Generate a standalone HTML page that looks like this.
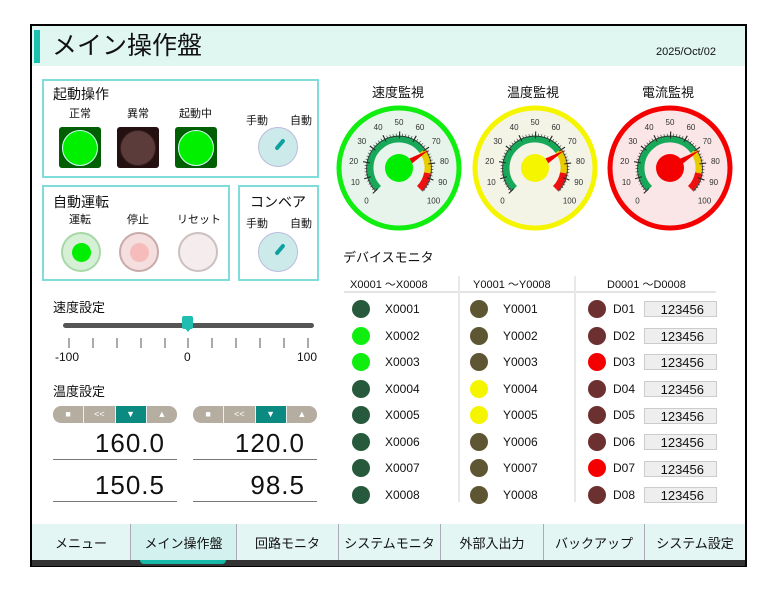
<!DOCTYPE html>
<html><head><meta charset="utf-8"><style>
*{margin:0;padding:0;box-sizing:border-box}
body{width:780px;height:592px;background:#fff;position:relative;font-family:"Liberation Sans","Noto Sans CJK JP",sans-serif;color:#111;overflow:hidden}
.a{position:absolute}
.frame{left:30px;top:24px;width:717px;height:543px;border:2px solid #000;background:#fff}
.hdr{left:32px;top:26px;width:713px;height:40px;background:#e0f6f1}
.box{border:2px solid #7fdcd8}
.t{position:absolute;white-space:nowrap}
.lampsq{width:42px;height:41px;background:#005f00;border-radius:3px}
.lampsq i{position:absolute;left:3px;top:3px;width:36px;height:36px;border-radius:50%;background:#00f000;border:1.5px solid #dff}
.knob{width:40px;height:40px;border-radius:50%;background:#cdeaea;border:1.5px solid #bbd}
.knob b{position:absolute;left:19px;top:10px;width:4px;height:13px;background:#10a0a0;border-radius:2px;transform:rotate(40deg)}
.rb{width:40px;height:40px;border-radius:50%}
.dl{width:18px;height:18px;border-radius:50%}
.dbox{width:73px;height:16px;background:#eee;border:1px solid #ccc;font-size:13px;text-align:right;padding-right:12px;line-height:15px}
.tab{top:524px;height:36px;background:#e3f6f4;font-size:13px;text-align:center;line-height:40px;border-left:1.5px solid #aab}
.bbar{height:17px;background:#b5aea0;top:406px;border-radius:8px;overflow:hidden;display:flex}
.bbar span{flex:1;border-left:1px solid #eee;color:#fff;font-size:9px;text-align:center;line-height:17px}
.bbar span:first-child{border:none}
.val{font-size:26px;text-align:right;width:124px;border-bottom:1.5px solid #777;height:31px;line-height:28px;padding-right:12px;letter-spacing:1px}
.dt{font-size:12px}
</style></head><body>
<div class="a frame"></div>
<div class="a hdr"></div>
<div class="a" style="left:34px;top:30px;width:6px;height:33px;background:#1cc0b0"></div>
<div class="t" style="left:52px;top:29px;font-size:25px;line-height:34px">メイン操作盤</div>
<div class="t" style="left:656px;top:46px;font-size:11px">2025/Oct/02</div>

<div class="a box" style="left:42px;top:79px;width:277px;height:99px"></div>
<div class="t" style="left:53px;top:84px;font-size:14px">起動操作</div>
<div class="t" style="left:69px;top:105px;font-size:11px">正常</div>
<div class="t" style="left:127px;top:105px;font-size:11px">異常</div>
<div class="t" style="left:179px;top:105px;font-size:11px">起動中</div>
<div class="a lampsq" style="left:59px;top:127px"><i></i></div>
<div class="a lampsq" style="left:117px;top:127px;background:#241010"><i style="background:#5c3c3a;border-color:#3a2020"></i></div>
<div class="a lampsq" style="left:175px;top:127px"><i></i></div>
<div class="t" style="left:246px;top:112px;font-size:11px">手動</div>
<div class="t" style="left:290px;top:112px;font-size:11px">自動</div>
<div class="a knob" style="left:258px;top:127px"><b></b></div>

<div class="a box" style="left:42px;top:185px;width:188px;height:96px"></div>
<div class="t" style="left:53px;top:192px;font-size:14px">自動運転</div>
<div class="t" style="left:69px;top:211px;font-size:11px">運転</div>
<div class="t" style="left:127px;top:211px;font-size:11px">停止</div>
<div class="t" style="left:177px;top:211px;font-size:11px">リセット</div>
<div class="a rb" style="left:61px;top:232px;background:#d6f0d6;border:2px solid #a8d8a8"><div class="a" style="left:9px;top:9px;width:19px;height:19px;border-radius:50%;background:#00ee00"></div></div>
<div class="a rb" style="left:119px;top:232px;background:#f5dede;border:2px solid #c8aaaa"><div class="a" style="left:9px;top:9px;width:19px;height:19px;border-radius:50%;background:#f6bcbc"></div></div>
<div class="a rb" style="left:178px;top:232px;background:#f4eced;border:2px solid #ccc0c0"></div>

<div class="a box" style="left:238px;top:185px;width:81px;height:96px"></div>
<div class="t" style="left:250px;top:192px;font-size:14px">コンベア</div>
<div class="t" style="left:246px;top:215px;font-size:11px">手動</div>
<div class="t" style="left:290px;top:215px;font-size:11px">自動</div>
<div class="a knob" style="left:258px;top:232px"><b></b></div>

<div class="t" style="left:53px;top:297px;font-size:13px">速度設定</div>
<div class="a" style="left:63px;top:323px;width:251px;height:5px;background:#555;border-radius:3px"></div>
<div class="a" style="left:182px;top:316px;width:11px;height:13px;background:#20bdb0;border-radius:2px"></div>
<div class="a" style="left:184px;top:327px;width:0;height:0;border-left:4px solid transparent;border-right:4px solid transparent;border-top:5px solid #20bdb0"></div>
<svg class="a" style="left:60px;top:336px" width="260" height="14"><g stroke="#555" stroke-width="1">
<line x1="9" y1="2" x2="9" y2="12"/><line x1="33" y1="2" x2="33" y2="12"/><line x1="57" y1="2" x2="57" y2="12"/><line x1="81" y1="2" x2="81" y2="12"/><line x1="105" y1="2" x2="105" y2="12"/><line x1="128" y1="2" x2="128" y2="12"/><line x1="152" y1="2" x2="152" y2="12"/><line x1="176" y1="2" x2="176" y2="12"/><line x1="200" y1="2" x2="200" y2="12"/><line x1="224" y1="2" x2="224" y2="12"/><line x1="248" y1="2" x2="248" y2="12"/></g></svg>
<div class="t" style="left:55px;top:350px;font-size:12px">-100</div>
<div class="t" style="left:184px;top:350px;font-size:12px">0</div>
<div class="t" style="left:297px;top:350px;font-size:12px">100</div>

<div class="t" style="left:53px;top:381px;font-size:13px">温度設定</div>
<div class="a bbar" style="left:53px;width:124px"><span>■</span><span>&lt;&lt;</span><span style="background:#0a8a80">▼</span><span>▲</span></div>
<div class="a bbar" style="left:193px;width:124px"><span>■</span><span>&lt;&lt;</span><span style="background:#0a8a80">▼</span><span>▲</span></div>
<div class="a val" style="left:53px;top:429px">160.0</div>
<div class="a val" style="left:193px;top:429px">120.0</div>
<div class="a val" style="left:53px;top:471px">150.5</div>
<div class="a val" style="left:193px;top:471px">98.5</div>

<div class="t" style="left:372px;top:82px;font-size:13px">速度監視</div>
<div class="t" style="left:507px;top:82px;font-size:13px">温度監視</div>
<div class="t" style="left:642px;top:82px;font-size:13px">電流監視</div>
<svg class="a" style="left:330px;top:100px" width="420" height="140" font-family="Liberation Sans" font-size="8" fill="#333">
<defs>
<g id="gsc">
<path d="M-20.5 20.5 A29 29 0 1 1 23.46 -17.05" fill="none" stroke="#17a85a" stroke-width="7"/>
<path d="M23.46 -17.05 A29 29 0 0 1 28.56 5.0" fill="none" stroke="#e8cc00" stroke-width="7"/>
<path d="M28.56 5.0 A29 29 0 0 1 20.5 20.5" fill="none" stroke="#ee1010" stroke-width="7"/>
<path d="M-23.33 23.33 A33 33 0 1 1 23.33 23.33" fill="none" stroke="#333" stroke-width="3" stroke-dasharray="0.6 2.51"/>
<path d="M-23.33 23.33 A33 33 0 1 1 23.33 23.33" fill="none" stroke="#222" stroke-width="7" stroke-dasharray="1 14.55"/>
<path d="M-23.33 23.33 A32.5 32.5 0 1 1 23.33 23.33" fill="none" stroke="#333" stroke-width="0.8"/>
<polygon points="7,-8 11,-3 30,-18" fill="#e00"/>
<g text-anchor="middle">
<text x="-32.5" y="35.5">0</text><text x="-43.7" y="17.2">10</text><text x="-45.4" y="-4.2">20</text><text x="-37.2" y="-24">30</text><text x="-20.9" y="-38">40</text><text x="0" y="-43">50</text><text x="20.9" y="-38">60</text><text x="37.2" y="-24">70</text><text x="45.4" y="-4.2">80</text><text x="43.7" y="17.2">90</text><text x="34.5" y="35.5">100</text></g>
</g></defs>
<circle cx="69" cy="68" r="60" fill="#e6f4ec" stroke="#10ee10" stroke-width="5"/>
<use href="#gsc" x="69" y="68"/><circle cx="69" cy="68" r="14" fill="#00ee00"/>
<circle cx="205" cy="68" r="60" fill="#f3f3e6" stroke="#f5f500" stroke-width="5"/>
<use href="#gsc" x="205" y="68"/><circle cx="205" cy="68" r="14" fill="#f5f500"/>
<circle cx="340" cy="68" r="60" fill="#fae6e6" stroke="#f50000" stroke-width="5"/>
<use href="#gsc" x="340" y="68"/><circle cx="340" cy="68" r="14" fill="#f50000"/>
</svg>

<div class="t" style="left:343px;top:247px;font-size:13px">デバイスモニタ</div>
<div class="t" style="left:350px;top:276px;font-size:11px">X0001 ～X0008</div>
<div class="t" style="left:473px;top:276px;font-size:11px">Y0001 ～Y0008</div>
<div class="t" style="left:607px;top:276px;font-size:11px">D0001 ～D0008</div>
<div class="a" style="left:344px;top:291px;width:372px;height:1.5px;background:#e4e4e4"></div>
<div class="a" style="left:458px;top:276px;width:1.5px;height:226px;background:#e8e8e8"></div>
<div class="a" style="left:574px;top:276px;width:1.5px;height:226px;background:#e8e8e8"></div>
<div class="a dl" style="left:352px;top:300px;background:#275a3c"></div><div class="t dt" style="left:385px;top:302px">X0001</div><div class="a dl" style="left:470px;top:300px;background:#5e5632"></div><div class="t dt" style="left:503px;top:302px">Y0001</div><div class="a dl" style="left:588px;top:300px;background:#6c3030"></div><div class="t dt" style="left:613px;top:302px">D01</div><div class="a dbox" style="left:644px;top:301px">123456</div>
<div class="a dl" style="left:352px;top:327px;background:#10ee10"></div><div class="t dt" style="left:385px;top:329px">X0002</div><div class="a dl" style="left:470px;top:327px;background:#5e5632"></div><div class="t dt" style="left:503px;top:329px">Y0002</div><div class="a dl" style="left:588px;top:327px;background:#6c3030"></div><div class="t dt" style="left:613px;top:329px">D02</div><div class="a dbox" style="left:644px;top:328px">123456</div>
<div class="a dl" style="left:352px;top:353px;background:#10ee10"></div><div class="t dt" style="left:385px;top:355px">X0003</div><div class="a dl" style="left:470px;top:353px;background:#5e5632"></div><div class="t dt" style="left:503px;top:355px">Y0003</div><div class="a dl" style="left:588px;top:353px;background:#f50000"></div><div class="t dt" style="left:613px;top:355px">D03</div><div class="a dbox" style="left:644px;top:354px">123456</div>
<div class="a dl" style="left:352px;top:380px;background:#275a3c"></div><div class="t dt" style="left:385px;top:382px">X0004</div><div class="a dl" style="left:470px;top:380px;background:#f5f500"></div><div class="t dt" style="left:503px;top:382px">Y0004</div><div class="a dl" style="left:588px;top:380px;background:#6c3030"></div><div class="t dt" style="left:613px;top:382px">D04</div><div class="a dbox" style="left:644px;top:381px">123456</div>
<div class="a dl" style="left:352px;top:406px;background:#275a3c"></div><div class="t dt" style="left:385px;top:408px">X0005</div><div class="a dl" style="left:470px;top:406px;background:#f5f500"></div><div class="t dt" style="left:503px;top:408px">Y0005</div><div class="a dl" style="left:588px;top:406px;background:#6c3030"></div><div class="t dt" style="left:613px;top:408px">D05</div><div class="a dbox" style="left:644px;top:408px">123456</div>
<div class="a dl" style="left:352px;top:433px;background:#275a3c"></div><div class="t dt" style="left:385px;top:435px">X0006</div><div class="a dl" style="left:470px;top:433px;background:#5e5632"></div><div class="t dt" style="left:503px;top:435px">Y0006</div><div class="a dl" style="left:588px;top:433px;background:#6c3030"></div><div class="t dt" style="left:613px;top:435px">D06</div><div class="a dbox" style="left:644px;top:434px">123456</div>
<div class="a dl" style="left:352px;top:459px;background:#275a3c"></div><div class="t dt" style="left:385px;top:461px">X0007</div><div class="a dl" style="left:470px;top:459px;background:#5e5632"></div><div class="t dt" style="left:503px;top:461px">Y0007</div><div class="a dl" style="left:588px;top:459px;background:#f50000"></div><div class="t dt" style="left:613px;top:461px">D07</div><div class="a dbox" style="left:644px;top:461px">123456</div>
<div class="a dl" style="left:352px;top:486px;background:#275a3c"></div><div class="t dt" style="left:385px;top:488px">X0008</div><div class="a dl" style="left:470px;top:486px;background:#5e5632"></div><div class="t dt" style="left:503px;top:488px">Y0008</div><div class="a dl" style="left:588px;top:486px;background:#6c3030"></div><div class="t dt" style="left:613px;top:488px">D08</div><div class="a dbox" style="left:644px;top:487px">123456</div>

<div class="a tab" style="left:32px;width:98px;border-left:none">メニュー</div>
<div class="a tab" style="left:130px;width:106px;background:#d3f1ee">メイン操作盤</div>
<div class="a tab" style="left:236px;width:102px">回路モニタ</div>
<div class="a tab" style="left:338px;width:102px">システムモニタ</div>
<div class="a tab" style="left:440px;width:103px">外部入出力</div>
<div class="a tab" style="left:543px;width:101px">バックアップ</div>
<div class="a tab" style="left:644px;width:101px">システム設定</div>
<div class="a" style="left:32px;top:560px;width:713px;height:6px;background:#333"></div>
<div class="a" style="left:140px;top:560px;width:86px;height:4px;background:#18b8a8;border-radius:0 0 40px 40px"></div>
</body></html>
